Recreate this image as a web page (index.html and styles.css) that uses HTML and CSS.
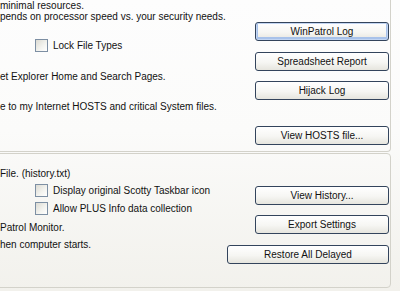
FILE: index.html
```html
<!DOCTYPE html>
<html lang="en">
<head>
    <meta charset="UTF-8">
    <meta name="viewport" content="width=device-width, initial-scale=1.0">
    <title>WinPatrol Options</title>
    <link rel="stylesheet" href="styles.css">
</head>
<body>
    <div class="tab-page">
        <div class="group group-top">
            <div class="group-text">
                <p class="line">minimal resources.</p>
                <p class="line">pends on processor speed vs. your security needs.</p>
                <label class="check check-lock"><span class="box"></span>Lock File Types</label>
                <p class="line line-explorer">et Explorer Home and Search Pages.</p>
                <p class="line line-hosts">e to my Internet HOSTS and critical System files.</p>
            </div>
            <div class="group-buttons">
                <button type="button" class="btn btn-default btn-log">WinPatrol Log</button>
                <button type="button" class="btn btn-report">Spreadsheet Report</button>
                <button type="button" class="btn btn-hijack">Hijack Log</button>
                <button type="button" class="btn btn-hosts">View HOSTS file...</button>
            </div>
        </div>

        <div class="group group-bottom">
            <div class="group-text">
                <p class="line">File. (history.txt)</p>
                <label class="check check-scotty"><span class="box"></span>Display original Scotty Taskbar icon</label>
                <label class="check check-plus"><span class="box"></span>Allow PLUS Info data collection</label>
                <p class="line line-monitor">Patrol Monitor.</p>
                <p class="line line-starts">hen computer starts.</p>
            </div>
            <div class="group-buttons">
                <button type="button" class="btn btn-history">View History...</button>
                <button type="button" class="btn btn-export">Export Settings</button>
                <button type="button" class="btn btn-wide btn-restore">Restore All Delayed</button>
            </div>
        </div>
    </div>
</body>
</html>
```

FILE: styles.css
```css
* {
    margin: 0;
    padding: 0;
    box-sizing: border-box;
}

body {
    font-family: 'Liberation Sans', Arial, sans-serif;
    font-size: 10px;
    color: #111;
    background: #f2f1ec;
}

.tab-page {
    width: 400px;
    height: 291px;
    overflow: hidden;
    background: linear-gradient(#fdfdfd 0%, #fbfbfa 45%, #f2f1ec 100%);
}

/* group boxes, left and top edges run past the window */
.group {
    display: flex;
    margin-left: -10px;
    width: 401px;
    border: 1px solid #d3d2ca;
    border-radius: 4px;
    padding: 0 1px 0 9px;
}

.group-top {
    margin-top: -20px;
    height: 172px;
    border-top-color: transparent;
    padding-top: 19px;
}

.group-bottom {
    margin-top: 1px;
    height: 135px;
}

.group-text {
    flex: 1;
}

.group-buttons {
    display: flex;
    flex-direction: column;
    align-items: flex-end;
}

.line {
    line-height: 11px;
    height: 11px;
    white-space: nowrap;
}

.line-explorer,
.line-hosts {
    margin-top: 19px;
}

.check {
    display: flex;
    align-items: center;
    height: 13px;
    margin-left: 35px;
    white-space: nowrap;
}

.box {
    width: 13px;
    height: 13px;
    margin-right: 5px;
    border: 1px solid #7d8fa3;
    background: linear-gradient(135deg, #dcdbd3 0%, #f4f4f0 60%, #fff 100%);
}

.check-lock {
    margin-top: 17px;
}

.group-bottom .group-text {
    padding-top: 14px;
}

.check-scotty {
    margin-top: 5px;
}

.check-plus {
    margin-top: 5px;
}

.line-monitor {
    margin-top: 7px;
}

.line-starts {
    margin-top: 6px;
}

/* XP style push buttons */
.btn {
    display: block;
    width: 134px;
    height: 19px;
    border: 1px solid #33445c;
    border-radius: 3px;
    background: linear-gradient(#ffffff 0%, #f6f6f3 55%, #e6e5de 100%);
    font-family: 'Liberation Sans', Arial, sans-serif;
    font-size: 10px;
    color: #111;
    cursor: pointer;
}

.btn-wide {
    width: 162px;
}

.btn-default {
    box-shadow: inset 0 0 0 1px #c2d5f2, inset 0 -1px 0 2px #a8c2ea;
}

.btn-log {
    margin-top: 22px;
}

.btn-report {
    margin-top: 11px;
}

.btn-hijack {
    margin-top: 10px;
}

.btn-hosts {
    margin-top: 26px;
}

.btn-history {
    margin-top: 32px;
}

.btn-export {
    margin-top: 10px;
}

.btn-restore {
    margin-top: 11px;
}
```
